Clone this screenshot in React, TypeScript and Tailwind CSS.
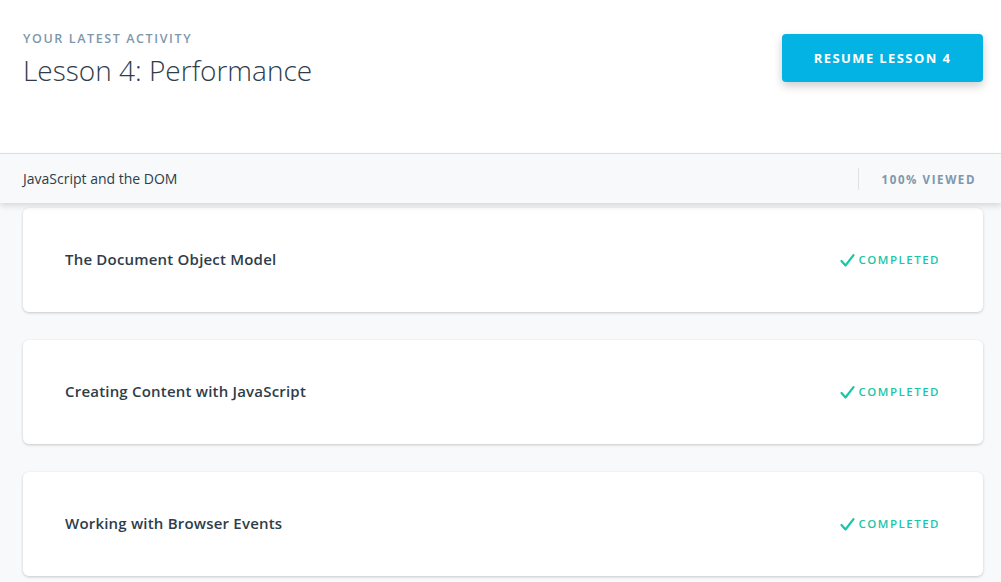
import React from "react";

const lessons = [
  "The Document Object Model",
  "Creating Content with JavaScript",
  "Working with Browser Events",
];

function Check() {
  return (
    <svg width="15" height="13" viewBox="0 0 15 13" fill="none">
      <path d="M1.5 7 L5.5 11.5 L13.5 1.2" stroke="#18c6a7" strokeWidth="2.2" strokeLinecap="round" strokeLinejoin="round" />
    </svg>
  );
}

export default function App() {
  return (
    <div className="w-[1001px] h-[582px] overflow-hidden bg-[#f7f9fa] font-['Open_Sans',sans-serif]">
      <div className="bg-white h-[154px] border-b border-[#dbe2e8] flex justify-between pl-[23px] pr-[18px]">
        <div className="pt-[30px]">
          <div className="text-[12.5px] font-semibold tracking-[1.6px] text-[#7d97ad] leading-[18px]">YOUR LATEST ACTIVITY</div>
          <div className="text-[28px] font-light text-[#2e3d49] leading-[36px] mt-[4px]">Lesson 4: Performance</div>
        </div>
        <div className="pt-[34px]">
          <button className="w-[201px] h-[48px] pt-[1px] bg-[#02b3e4] rounded-[4px] text-white text-[13px] font-bold tracking-[1.4px] shadow-[0_4px_10px_rgba(0,0,0,0.2)]">
            RESUME LESSON 4
          </button>
        </div>
      </div>
      <div className="relative z-10 h-[49px] bg-[#f7f9fa] flex items-center justify-between pl-[23px] shadow-[0_3px_6px_rgba(0,0,0,0.13)]">
        <div className="text-[14px] text-[#2e3d49]">JavaScript and the DOM</div>
        <div className="flex items-center h-full">
          <div className="w-px h-[22px] bg-[#dbe2e8]"></div>
          <div className="pl-[23px] pr-[25px] text-[11.5px] font-bold tracking-[1.6px] text-[#7d97ad] pt-[2px]">100% VIEWED</div>
        </div>
      </div>
      <div className="flex flex-col gap-[28px] pl-[23px] pr-[18px] pt-[5px]">
        {lessons.map((t) => (
          <div key={t} className="h-[104px] bg-white rounded-[6px] shadow-[0_1px_3px_rgba(0,0,0,0.2)] flex items-center justify-between pl-[42px] pr-[43px]">
            <div className="text-[15px] font-semibold tracking-[0.2px] text-[#2e3d49] -mt-[2px]">{t}</div>
            <div className="flex items-center gap-[3px]">
              <Check />
              <span className="text-[11.5px] font-semibold tracking-[1.5px] text-[#18c6a7]">COMPLETED</span>
            </div>
          </div>
        ))}
      </div>
    </div>
  );
}
